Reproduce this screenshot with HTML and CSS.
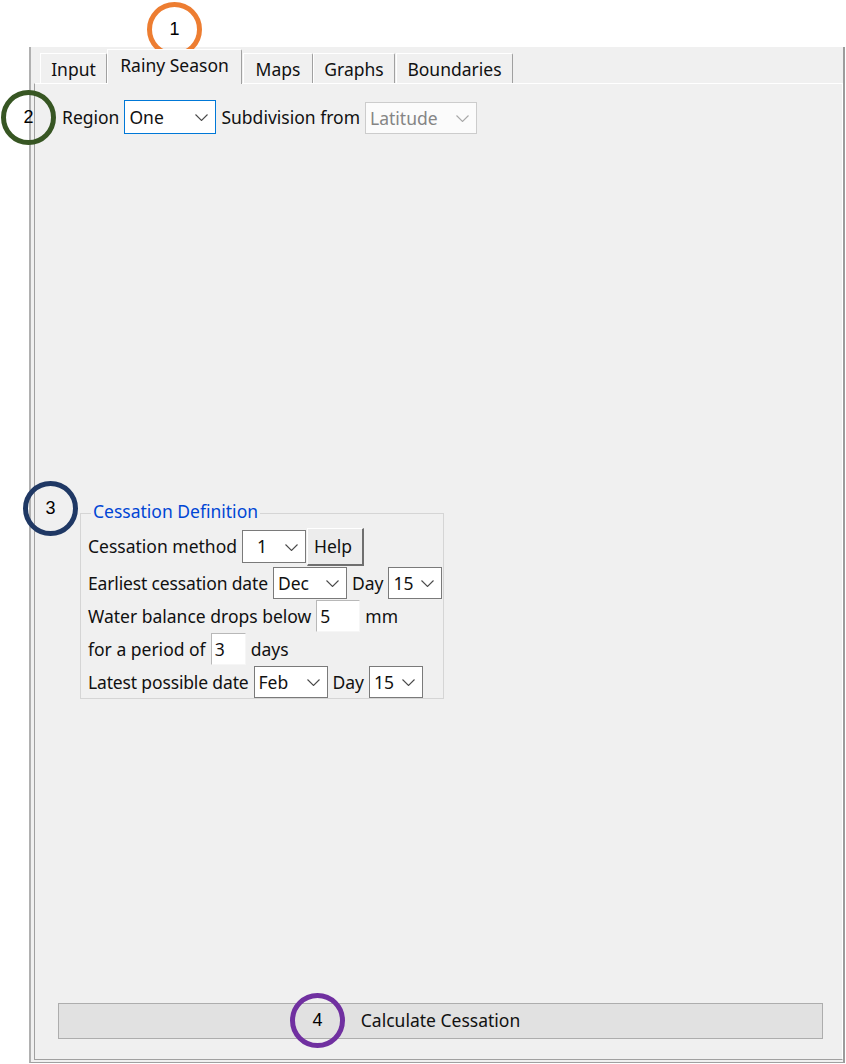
FILE: index.html
```html
<!DOCTYPE html>
<html>
<head>
<meta charset="utf-8">
<link rel="stylesheet" href="styles.css">
</head>
<body>
<div class="frame">
  <div class="tabs">
    <div class="tab t-input">Input</div>
    <div class="tab sel">Rainy Season</div>
    <div class="tab t-maps">Maps</div>
    <div class="tab t-graphs">Graphs</div>
    <div class="tab t-bound">Boundaries</div>
  </div>
  <div class="panel">
    <div class="region-row">
      <span class="lbl">Region</span>
      <div class="combo focus w-one"><span>One</span><svg class="chev" width="13" height="7" viewBox="0 0 13 7"><polyline points="0.5,0.5 6.5,6.5 12.5,0.5"/></svg></div>
      <span class="lbl">Subdivision from</span>
      <div class="combo disabled w-lat"><span>Latitude</span><svg class="chev" width="13" height="7" viewBox="0 0 13 7"><polyline points="0.5,0.5 6.5,6.5 12.5,0.5"/></svg></div>
    </div>
    <fieldset class="group">
      <legend>Cessation Definition</legend>
      <div class="grow first">
        <span class="lbl">Cessation method</span>
        <div class="combo w-meth"><span class="pad1">1</span><svg class="chev" width="13" height="7" viewBox="0 0 13 7"><polyline points="0.5,0.5 6.5,6.5 12.5,0.5"/></svg></div>
        <button class="help">Help</button>
      </div>
      <div class="grow">
        <span class="lbl tight">Earliest cessation date</span>
        <div class="combo w-mon"><span>Dec</span><svg class="chev" width="13" height="7" viewBox="0 0 13 7"><polyline points="0.5,0.5 6.5,6.5 12.5,0.5"/></svg></div>
        <span class="lbl">Day</span>
        <div class="combo w-day"><span>15</span><svg class="chev" width="13" height="7" viewBox="0 0 13 7"><polyline points="0.5,0.5 6.5,6.5 12.5,0.5"/></svg></div>
      </div>
      <div class="grow">
        <span class="lbl">Water balance drops below</span>
        <div class="field w-5">5</div>
        <span class="lbl">mm</span>
      </div>
      <div class="grow">
        <span class="lbl">for a period of</span>
        <div class="field w-3">3</div>
        <span class="lbl">days</span>
      </div>
      <div class="grow">
        <span class="lbl tight">Latest possible date</span>
        <div class="combo w-mon"><span>Feb</span><svg class="chev" width="13" height="7" viewBox="0 0 13 7"><polyline points="0.5,0.5 6.5,6.5 12.5,0.5"/></svg></div>
        <span class="lbl">Day</span>
        <div class="combo w-day"><span>15</span><svg class="chev" width="13" height="7" viewBox="0 0 13 7"><polyline points="0.5,0.5 6.5,6.5 12.5,0.5"/></svg></div>
      </div>
    </fieldset>
    <div class="spacer"></div>
    <button class="calc">Calculate Cessation</button>
  </div>
</div>
<div class="mark m1">1</div>
<div class="mark m2">2</div>
<div class="mark m3">3</div>
<div class="mark m4">4</div>
</body>
</html>
```
FILE: styles.css
```css
* { box-sizing: border-box; }
html, body { margin: 0; padding: 0; background: #ffffff; }
body {
  width: 846px;
  height: 1064px;
  position: relative;
  overflow: hidden;
  font-family: "Noto Sans", "Open Sans", sans-serif;
  font-size: 17.5px;
  color: #111;
}
.frame {
  margin: 47px 0 0 29px;
  width: 816px;
  height: 1016px;
  background: #f0f0f0;
  border-left: 2px solid #b0b0b0;
  border-right: 2px solid #9c9c9c;
  border-bottom: 1px solid #a0a0a0;
  padding-bottom: 2px;
  display: flex;
  flex-direction: column;
}
.tabs {
  height: 36px;
  flex: none;
  display: flex;
  align-items: flex-end;
  padding-left: 9px;
}
.tab {
  height: 30px;
  padding: 2px 0 0 0;
  display: flex;
  align-items: center;
  justify-content: center;
  border-top: 1px solid #ffffff;
  border-left: 1px solid #ffffff;
  border-right: 1px solid #a0a0a0;
  border-top-right-radius: 2px;
  line-height: 1;
  white-space: nowrap;
}
.t-input { width: 67px; }
.t-maps { width: 70px; margin-left: 1px; }
.t-graphs { width: 82px; }
.t-bound { width: 117px; margin-left: 1px; }
.tab.sel {
  width: 135px;
  height: 35px;
  margin-bottom: -1px;
  padding: 0 0 2px 0;
  position: relative;
  z-index: 1;
  background: #f0f0f0;
}
.panel {
  margin-left: 3px;
  height: 977px;
  flex: none;
  border-top: 1px solid #ffffff;
  border-left: 1px solid #a0a0a0;
  border-right: 1px solid #ffffff;
  border-bottom: 1px solid #a0a0a0;
  display: flex;
  flex-direction: column;
  padding-top: 16px;
}
.region-row {
  height: 34px;
  display: flex;
  align-items: center;
  gap: 5px;
  padding-left: 27px;
}
.lbl { white-space: nowrap; line-height: 1; padding-top: 1px; }
.lbl.tight { letter-spacing: -0.15px; }
.combo {
  background: #ffffff;
  border: 1px solid #7a7a7a;
  height: 32px;
  display: flex;
  align-items: center;
  justify-content: space-between;
  padding: 1px 7px 0 4px;
  line-height: 1;
}
.chev { fill: none; stroke: #4a4a4a; stroke-width: 1.1; }
.combo.focus { border-color: #0078d7; height: 34px; }
.combo.disabled { border-color: #cccccc; color: #858585; background: #fbfbfb; height: 32px; margin-top: 2px; }
.combo.disabled .chev { stroke: #a8a8a8; }
.w-one { width: 92px; }
.w-lat { width: 112px; }
.w-meth { width: 64px; }
.w-mon { width: 74px; }
.w-day { width: 54px; }
.pad1 { padding-left: 10px; }
.group {
  margin: 367px 0 0 45px;
  width: 364px;
  min-width: 0;
  border: 1px solid #d5d5d5;
  padding: 2px 0 0 7px;
  display: flex;
  flex-direction: column;
  gap: 1px;
}
.group legend {
  color: #0046d5;
  line-height: 20px;
  padding: 0 2px 4px 2px;
  margin-left: 3px;
}
.grow {
  height: 32px;
  display: flex;
  align-items: center;
  gap: 5px;
}
.grow.first { height: 39px; gap: 0; }
.grow.first .combo { margin-left: 5px; height: 33px; }
.help {
  font: inherit;
  color: inherit;
  margin-left: 1px;
  width: 57px;
  height: 38px;
  background: #ececec;
  border-top: 1px solid #ffffff;
  border-left: 1px solid #ffffff;
  border-right: 2px solid #6f6f6f;
  border-bottom: 2px solid #6f6f6f;
  text-align: left;
  padding: 1px 0 0 6px;
  line-height: 1;
}
.field {
  height: 32px;
  background: #ffffff;
  border-top: 1px solid #b8b8b8;
  border-left: 1px solid #b8b8b8;
  border-right: 1px solid #f6f6f6;
  border-bottom: 1px solid #f6f6f6;
  display: flex;
  align-items: center;
  padding: 1px 0 0 3px;
  line-height: 1;
}
.w-5 { width: 44px; }
.w-3 { width: 35px; }
.spacer { flex: 1; }
.calc {
  font: inherit;
  color: inherit;
  margin: 0 19px 20px 23px;
  height: 36px;
  background: #e1e1e1;
  border: 1px solid #adadad;
  line-height: 1;
  padding-top: 1px;
}
.mark {
  position: absolute;
  width: 55px;
  height: 55px;
  border-radius: 50%;
  border: 5px solid;
  display: flex;
  align-items: center;
  justify-content: center;
  font-family: "Liberation Sans", sans-serif;
  font-size: 18px;
  color: #000;
}
.m1 { left: 147px; top: 2px; border-color: #ed7d31; }
.m2 { left: 1px; top: 90px; border-color: #375623; }
.m3 { left: 23px; top: 481px; border-color: #1f3864; }
.m4 { left: 290px; top: 993px; border-color: #7030a0; }
```
